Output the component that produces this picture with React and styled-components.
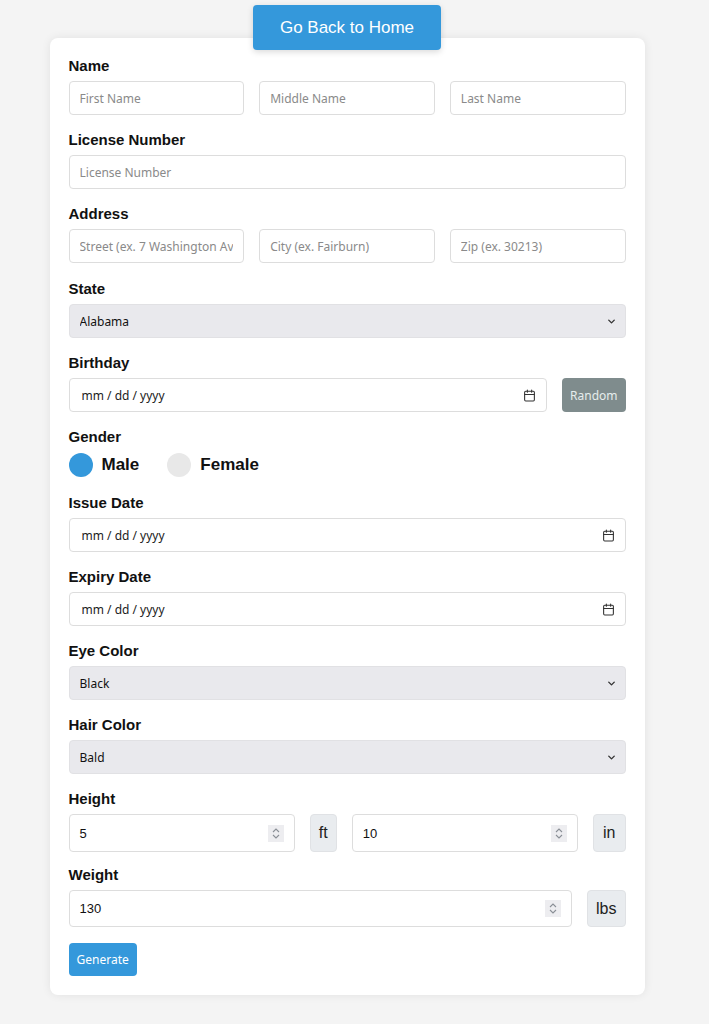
import React from "react";
import styled, { createGlobalStyle } from "styled-components";
import { ChevronDown, Calendar } from "lucide-react";

const GlobalStyle = createGlobalStyle`
  html, body {
    margin: 0;
    padding: 0;
    background: #f4f4f4;
    font-family: "Liberation Sans", Arial, sans-serif;
  }
`;

const Page = styled.div`
  width: 694px;
  padding: 5px 0 30px;
  display: flex;
  flex-direction: column;
  align-items: center;
`;

const HomeButton = styled.button`
  position: relative;
  z-index: 1;
  width: 188px;
  height: 45px;
  border: none;
  border-radius: 4px;
  background: #3498db;
  color: #fff;
  font-family: "Liberation Sans", Arial, sans-serif;
  font-size: 17px;
  box-shadow: 0 2px 6px rgba(0, 0, 0, 0.15);
  cursor: pointer;
`;

const Card = styled.form`
  width: 595px;
  box-sizing: border-box;
  margin-top: -12px;
  padding: 19px;
  background: #fff;
  border-radius: 8px;
  box-shadow: 0 0 10px rgba(0, 0, 0, 0.08);
  display: flex;
  flex-direction: column;
  gap: 16px;
`;

const Field = styled.div`
  display: flex;
  flex-direction: column;
  gap: ${({ $gap }) => $gap || 7}px;
  margin-top: ${({ $shift }) => $shift || 0}px;
`;

const Label = styled.div`
  font-size: 15px;
  line-height: 17px;
  font-weight: bold;
  color: #111;
`;

const Row = styled.div`
  display: flex;
  align-items: center;
  gap: 15px;
`;

const inputBase = `
  box-sizing: border-box;
  flex: 1 1 0;
  min-width: 0;
  width: 100%;
  height: 34px;
  min-height: 34px;
  border: 1px solid #ddd;
  border-radius: 4px;
  padding: 0 10px;
  background: #fff;
  font-family: "Noto Sans", "Open Sans", sans-serif;
  font-size: 12px;
  color: #222;
  outline: none;
  &::placeholder {
    color: #8a8a8a;
  }
`;

const TextInput = styled.input`
  ${inputBase}
`;

const DateBox = styled.div`
  ${inputBase}
  display: flex;
  align-items: center;
  justify-content: space-between;
  color: #222;
  padding: 0 10px 0 12px;
`;

const SelectWrap = styled.div`
  position: relative;
  display: flex;
`;

const Select = styled.select`
  ${inputBase}
  appearance: none;
  background: #e9e9ed;
  border-color: #e1e1e4;
  color: #111;
`;

const Chevron = styled(ChevronDown)`
  position: absolute;
  right: 9px;
  top: 12px;
  pointer-events: none;
`;

const GrayButton = styled.button`
  height: 34px;
  padding: 0 8px;
  border: none;
  border-radius: 4px;
  background: #7f8c8d;
  color: #e6ecec;
  font-family: "Noto Sans", "Open Sans", sans-serif;
  font-size: 12px;
  flex-shrink: 0;
`;

const RadioRow = styled.div`
  display: flex;
  align-items: center;
  height: 27px;
`;

const RadioOption = styled.label`
  display: flex;
  align-items: center;
  gap: 9px;
  margin-right: 28px;
  font-size: 17px;
  font-weight: bold;
  color: #111;
`;

const Dot = styled.span`
  width: 24px;
  height: 24px;
  border-radius: 50%;
  background: ${({ $checked }) => ($checked ? "#3498db" : "#e8e8e8")};
`;

const NumberBox = styled.div`
  ${inputBase}
  height: ${({ $h }) => $h || 38}px;
  min-height: ${({ $h }) => $h || 38}px;
  display: flex;
  align-items: center;
  justify-content: space-between;
  font-family: "Liberation Sans", Arial, sans-serif;
  font-size: 13px;
  color: #111;
`;

const Spinner = styled.span`
  width: 16px;
  height: 17px;
  background: #ededf0;
  display: flex;
  align-items: center;
  justify-content: center;
`;

const Unit = styled.span`
  box-sizing: border-box;
  height: ${({ $h }) => $h || 38}px;
  padding: 0 ${({ $pad }) => $pad || 8}px;
  display: flex;
  align-items: center;
  background: #e9ecef;
  border: 1px solid #e0e2e5;
  border-radius: 4px;
  font-size: 16px;
  color: #222;
  flex-shrink: 0;
`;

const GenerateButton = styled.button`
  align-self: flex-start;
  height: 33px;
  padding: 0 8px;
  border: none;
  border-radius: 4px;
  background: #3498db;
  color: #fff;
  font-family: "Noto Sans", "Open Sans", sans-serif;
  font-size: 12px;
`;

const SpinIcon = () => (
  <svg width="10" height="13" viewBox="0 0 10 13" fill="none" stroke="#8a8f96" strokeWidth="1.1">
    <path d="M2 5 L5 2 L8 5" />
    <path d="M2 8 L5 11 L8 8" />
  </svg>
);

const DateInput = () => (
  <DateBox>
    <span>mm / dd / yyyy</span>
    <Calendar size={13} color="#333" strokeWidth={2} />
  </DateBox>
);

const SelectField = ({ value }) => (
  <SelectWrap>
    <Select defaultValue={value}>
      <option>{value}</option>
    </Select>
    <Chevron size={11} strokeWidth={3} color="#333" />
  </SelectWrap>
);

const NumberInput = ({ value, h }) => (
  <NumberBox $h={h}>
    <span>{value}</span>
    <Spinner>
      <SpinIcon />
    </Spinner>
  </NumberBox>
);

export default function App() {
  return (
    <Page>
      <GlobalStyle />
      <HomeButton type="button">Go Back to Home</HomeButton>
      <Card onSubmit={(e) => e.preventDefault()}>
        <Field>
          <Label>Name</Label>
          <Row>
            <TextInput placeholder="First Name" />
            <TextInput placeholder="Middle Name" />
            <TextInput placeholder="Last Name" />
          </Row>
        </Field>
        <Field>
          <Label>License Number</Label>
          <TextInput placeholder="License Number" />
        </Field>
        <Field>
          <Label>Address</Label>
          <Row>
            <TextInput placeholder="Street (ex. 7 Washington Ave)" />
            <TextInput placeholder="City (ex. Fairburn)" />
            <TextInput placeholder="Zip (ex. 30213)" />
          </Row>
        </Field>
        <Field $shift={1}>
          <Label>State</Label>
          <SelectField value="Alabama" />
        </Field>
        <Field>
          <Label>Birthday</Label>
          <Row>
            <DateInput />
            <GrayButton type="button">Random</GrayButton>
          </Row>
        </Field>
        <Field $gap={6}>
          <Label>Gender</Label>
          <RadioRow>
            <RadioOption>
              <Dot $checked />
              Male
            </RadioOption>
            <RadioOption>
              <Dot />
              Female
            </RadioOption>
          </RadioRow>
        </Field>
        <Field>
          <Label>Issue Date</Label>
          <DateInput />
        </Field>
        <Field>
          <Label>Expiry Date</Label>
          <DateInput />
        </Field>
        <Field>
          <Label>Eye Color</Label>
          <SelectField value="Black" />
        </Field>
        <Field>
          <Label>Hair Color</Label>
          <SelectField value="Bald" />
        </Field>
        <Field>
          <Label>Height</Label>
          <Row>
            <NumberInput value="5" />
            <Unit>ft</Unit>
            <NumberInput value="10" />
            <Unit $pad={9}>in</Unit>
          </Row>
        </Field>
        <Field $shift={-2}>
          <Label>Weight</Label>
          <Row>
            <NumberInput value="130" h={37} />
            <Unit $h={37}>lbs</Unit>
          </Row>
        </Field>
        <GenerateButton type="submit">Generate</GenerateButton>
      </Card>
    </Page>
  );
}
